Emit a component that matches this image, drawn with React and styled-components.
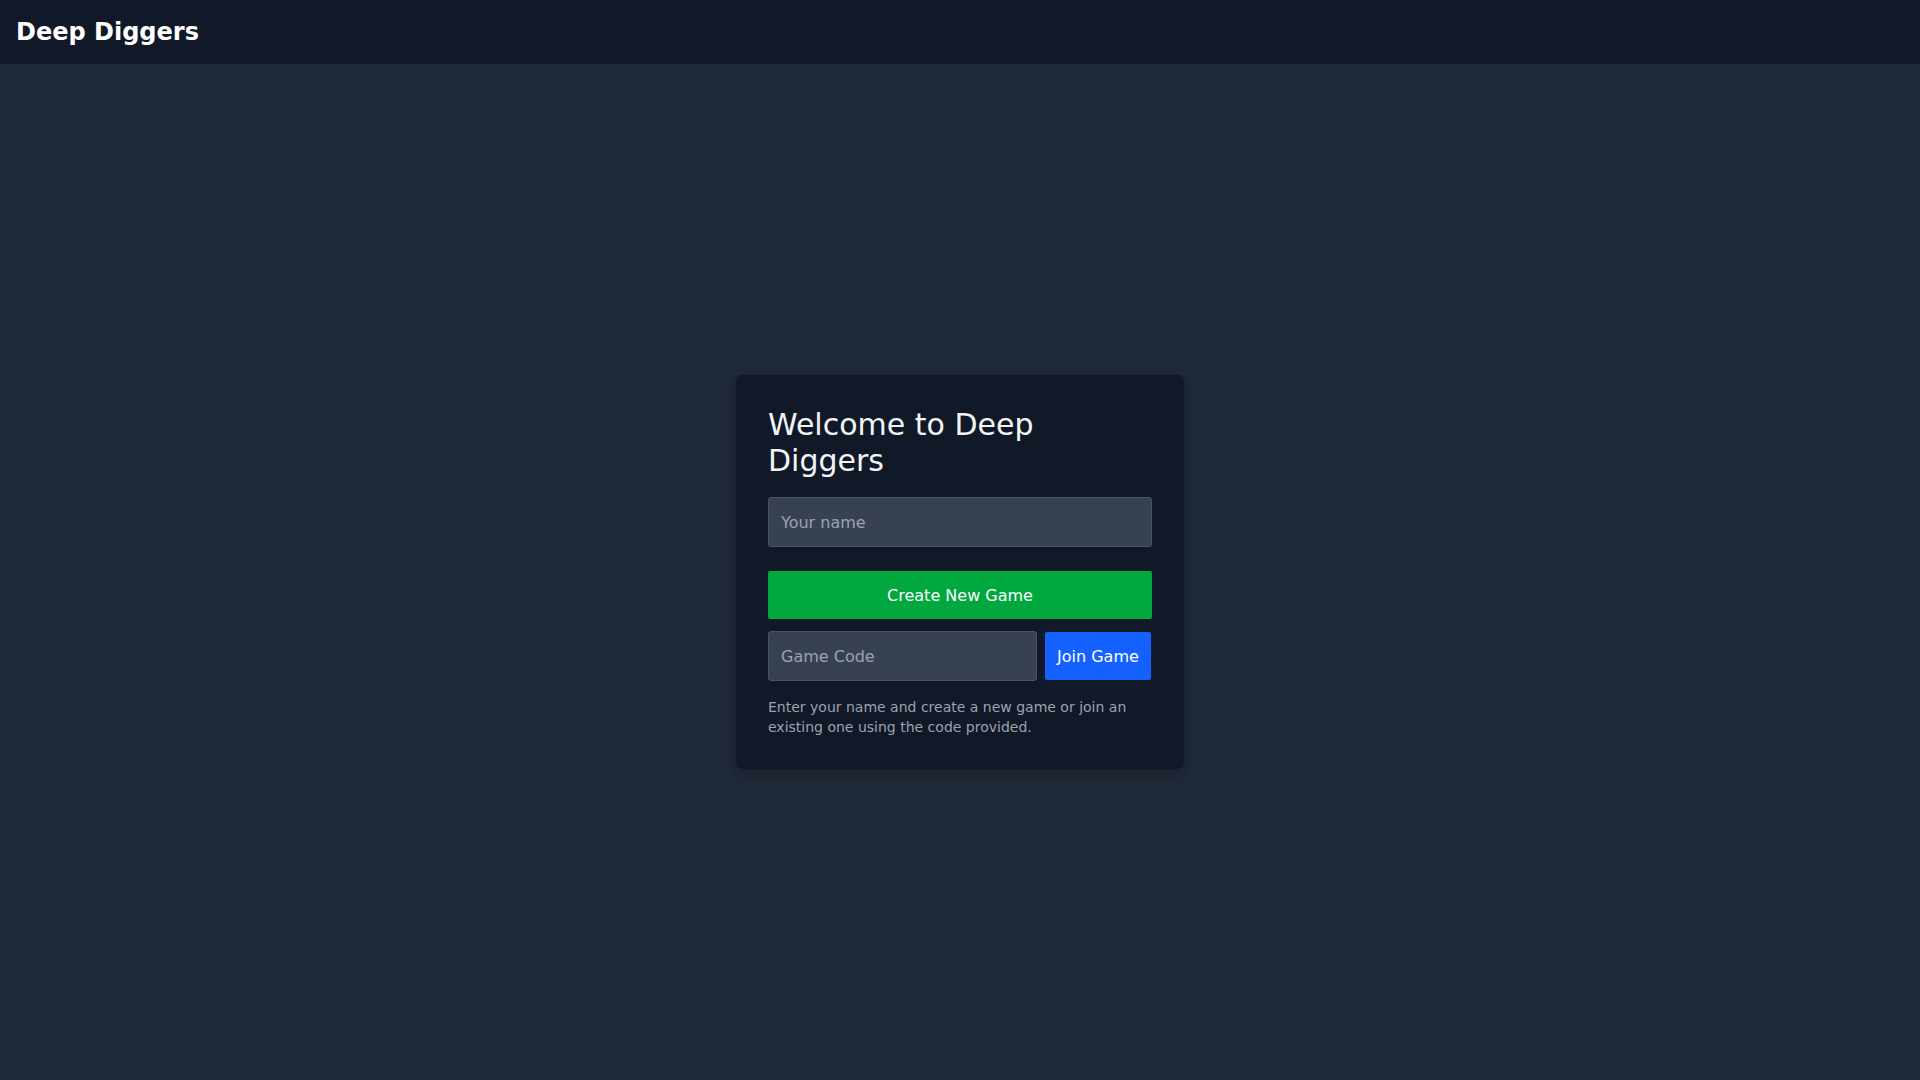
import React from 'react'
import styled, { createGlobalStyle } from 'styled-components'

const Global = createGlobalStyle`
  html, body { margin: 0; padding: 0; }
  body {
    background: #1f2937;
    font-family: "DejaVu Sans", "Liberation Sans", sans-serif;
    color: #f9fafb;
  }
  * { box-sizing: border-box; }
`

const Page = styled.div`
  min-height: 100vh;
  display: flex;
  flex-direction: column;
`

const Header = styled.header`
  height: 64px;
  background: #111827;
  display: flex;
  align-items: center;
  padding: 0 16px;
`

const Brand = styled.div`
  font-size: 24px;
  font-weight: bold;
  color: #ffffff;
`

const Main = styled.main`
  flex: 1;
  display: flex;
  align-items: center;
  justify-content: center;
`

const Card = styled.div`
  width: 448px;
  background: #111827;
  border-radius: 6px;
  padding: 32px;
  box-shadow: 0 4px 12px rgba(0, 0, 0, 0.25);
`

const Title = styled.h1`
  margin: 0 0 18px;
  font-size: 30px;
  font-weight: normal;
  line-height: 36px;
  color: #f3f4f6;
`

const Input = styled.input`
  width: 100%;
  height: 50px;
  padding: 0 12px;
  background: #374151;
  border: 1px solid #4b5563;
  border-radius: 3px;
  color: #f9fafb;
  font: 16px "DejaVu Sans", sans-serif;
  outline: none;
  &::placeholder { color: #9ca3af; }
`

const Button = styled.button`
  height: 48px;
  border: none;
  border-radius: 2px;
  color: #ffffff;
  font: 16px "DejaVu Sans", sans-serif;
  background: ${p => (p.variant === 'green' ? '#00a83f' : '#1461ff')};
  padding: 0 12px;
  cursor: pointer;
  ${p => p.full && 'width: 100%;'}
`

const Stack = styled.div`
  display: flex;
  flex-direction: column;
  gap: 24px;
`

const JoinRow = styled.div`
  display: flex;
  gap: 8px;
  margin-top: -12px;
  align-items: center;
`

const Help = styled.p`
  margin: 16px 0 0;
  font-size: 14px;
  line-height: 20px;
  color: #9ca3af;
`

export default function App() {
  return (
    <Page>
      <Global />
      <Header>
        <Brand>Deep Diggers</Brand>
      </Header>
      <Main>
        <Card>
          <Title>Welcome to Deep Diggers</Title>
          <Stack>
            <Input placeholder="Your name" />
            <Button variant="green" full>Create New Game</Button>
            <JoinRow>
              <Input placeholder="Game Code" style={{ width: 269 }} />
              <Button variant="blue">Join Game</Button>
            </JoinRow>
          </Stack>
          <Help>Enter your name and create a new game or join an existing one using the code provided.</Help>
        </Card>
      </Main>
    </Page>
  )
}
